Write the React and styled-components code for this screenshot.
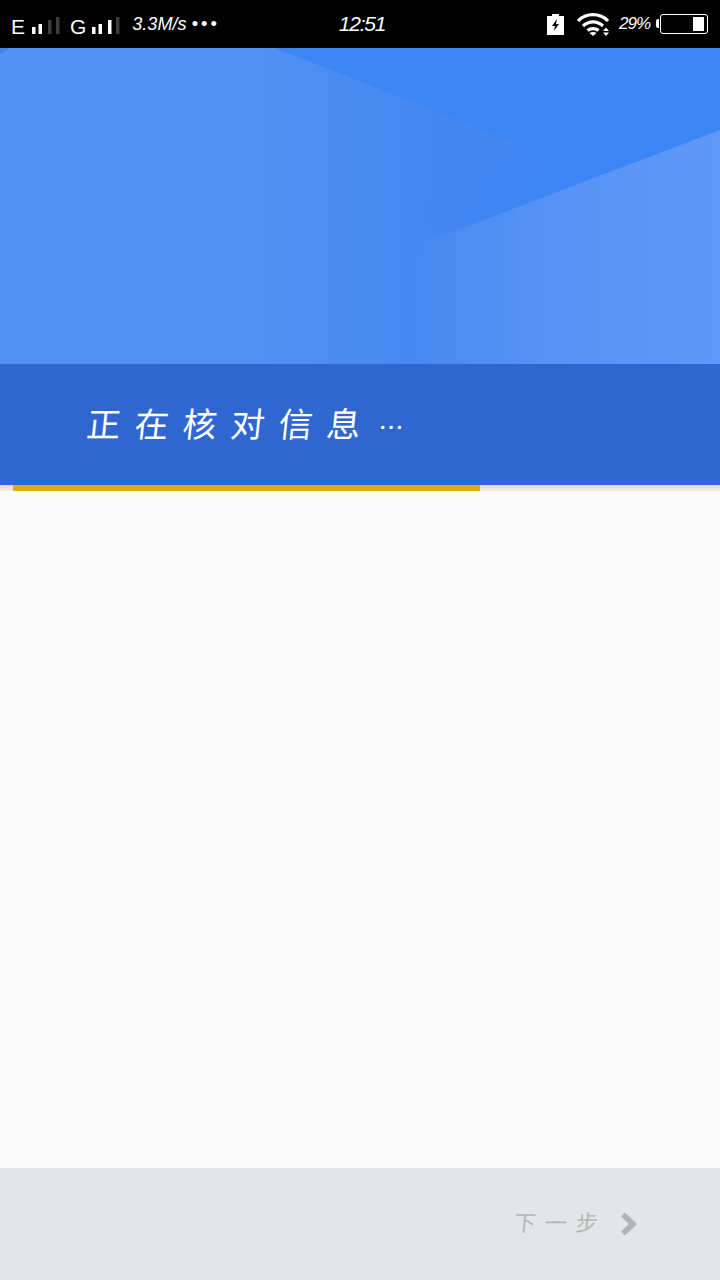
import React from "react";
import styled, { createGlobalStyle } from "styled-components";

const cjk = `"Noto Sans CJK SC", "Noto Sans CJK JP", sans-serif`;

const Global = createGlobalStyle`
  html, body { margin: 0; padding: 0; background: #fafafa; }
  * { box-sizing: border-box; }
`;

const Page = styled.div`
  width: 720px;
  height: 1280px;
  display: flex;
  flex-direction: column;
  background: #fafafa;
  overflow: hidden;
`;

const StatusBar = styled.div`
  height: 48px;
  background: #000;
  color: #fff;
  display: grid;
  grid-template-columns: 1fr auto 1fr;
  align-items: center;
  padding: 0 12px 0 11px;
`;

const StatusLeft = styled.div`
  display: flex;
  align-items: center;
`;

const StatusRight = styled.div`
  display: flex;
  align-items: center;
  justify-content: flex-end;
`;

const NetLetter = styled.span`
  font: 400 21px/1 "Liberation Sans", sans-serif;
  margin-top: 5px;
  margin-right: ${(p) => p.$gap}px;
`;

const Speed = styled.span`
  font: italic 400 18px/1 "Liberation Sans", sans-serif;
  margin-left: 12px;
  margin-top: -1px;
`;

const Dots = styled.span`
  font: 700 14px/1 "DejaVu Sans", sans-serif;
  letter-spacing: 0.5px;
  margin-left: 4px;
`;

const Clock = styled.span`
  font: italic 400 21px/1 "Liberation Sans", sans-serif;
  letter-spacing: -1.2px;
  margin-left: 5px;
  margin-top: -1px;
`;

const Percent = styled.span`
  font: italic 400 17px/1 "Liberation Sans", sans-serif;
  letter-spacing: -1px;
  margin: -1px 10px 0 9px;
`;

const Battery = styled.div`
  position: relative;
  width: 48px;
  height: 20px;
  border: 1.5px solid #fff;
  border-radius: 3px;
  display: flex;
  justify-content: flex-end;
  padding: 2px 3px;
  &::before {
    content: "";
    position: absolute;
    left: -5px;
    top: 4px;
    width: 3px;
    height: 9px;
    background: #fff;
    border-radius: 2px 0 0 2px;
  }
`;

const BatteryFill = styled.div`
  width: 11px;
  background: #fff;
`;

const Hero = styled.div`
  position: relative;
  height: 316px;
  background: linear-gradient(90deg, #5391f3 0%, #5290f3 36%, #4b8cf2 48%, #4587f1 60%, #4587f1 100%);
  overflow: hidden;
`;

const HeroArt = styled.svg`
  position: absolute;
  inset: 0;
  width: 100%;
  height: 100%;
`;

const Banner = styled.div`
  height: 121px;
  background: #2f66d0;
  display: flex;
  align-items: center;
  padding: 0 0 4px 87px;
`;

const BannerText = styled.h1`
  margin: 0;
  color: #fff;
  font: 400 34px/1 ${cjk};
  letter-spacing: 14px;
  white-space: nowrap;
  transform: skewX(-6deg);
`;

const Ellipsis = styled.span`
  font-size: 25px;
  letter-spacing: 0;
  margin-left: 4px;
`;

const ProgressTrack = styled.div`
  height: 6px;
  padding-left: 13px;
  background: linear-gradient(#e0d6c2, #f3efe6);
`;

const ProgressBar = styled.div`
  width: 467px;
  height: 100%;
  background: #e0a812;
`;

const Body = styled.div`
  flex: 1;
  background: #fafafa;
`;

const Footer = styled.div`
  height: 112px;
  background: #e2e6e7;
  display: flex;
  align-items: center;
  justify-content: flex-end;
  padding-right: 82px;
  gap: 22px;
`;

const NextLabel = styled.span`
  color: #b4b8b9;
  font: 400 22px/1 ${cjk};
  letter-spacing: 9px;
  margin-right: -9px;
  margin-top: -7px;
  transform: skewX(-6deg);
`;

const SignalSvg = styled.svg`
  display: block;
  margin-top: 2px;
  margin-right: ${(p) => p.$gap || 0}px;
`;

const WifiSvg = styled.svg`
  display: block;
  margin-left: 13px;
`;

const barX = [2, 8.5, 18, 26];
const barH = [7, 10, 14, 17];

function Signal({ on, gap }) {
  return (
    <SignalSvg width="30" height="18" viewBox="0 0 30 18" $gap={gap}>
      {barX.map((x, i) => (
        <rect key={i} x={x} y={18 - barH[i]} width="3.500" height={barH[i]} fill={i < on ? "#fff" : "#3d3d3d"} />
      ))}
    </SignalSvg>
  );
}

export default function App() {
  return (
    <Page>
      <Global />
      <StatusBar>
        <StatusLeft>
          <NetLetter $gap={5}>E</NetLetter>
          <Signal on={2} gap={10} />
          <NetLetter $gap={4}>G</NetLetter>
          <Signal on={3} />
          <Speed>3.3M/s</Speed>
          <Dots>•••</Dots>
        </StatusLeft>
        <Clock>12:51</Clock>
        <StatusRight>
          <svg width="17" height="21" viewBox="0 0 17 21">
            <path d="M5 0h7v2h5v19H0V2h5z" fill="#fff" />
            <path d="M10 5 5 12h3l-1 5 5-7H9z" fill="#000" />
          </svg>
          <WifiSvg width="33" height="24" viewBox="0 0 33 24">
            <g fill="none" stroke="#fff" strokeWidth="3.200">
              <path d="M1 9c8-8.500 22-8.500 30 0" />
              <path d="M6 14c6-5.500 14-5.500 20 0" />
              <path d="M10.500 18.500c3-2.500 8-2.500 11 0" />
            </g>
            <path d="M12.500 21c2-1.500 5-1.500 7 0L16 24z" fill="#fff" />
            <path d="M26 19h6l-3-3.500zM26 20.500h6L29 24z" fill="#fff" />
          </WifiSvg>
          <Percent>29%</Percent>
          <Battery>
            <BatteryFill />
          </Battery>
        </StatusRight>
      </StatusBar>
      <Hero>
        <HeroArt viewBox="0 0 720 316" preserveAspectRatio="none">
          <defs>
            <linearGradient id="lower" gradientUnits="userSpaceOnUse" x1="400" x2="720" y1="0" y2="0">
              <stop offset="0" stopColor="#4587f1" stopOpacity="0.4" />
              <stop offset="0.12" stopColor="#4a8af2" />
              <stop offset="0.45" stopColor="#5793f5" />
              <stop offset="1" stopColor="#6098f7" />
            </linearGradient>
            <filter id="soft" x="-30%" y="-30%" width="160%" height="160%">
              <feGaussianBlur stdDeviation="18" />
            </filter>
          </defs>
          <path d="M530 80H760V200L450 200z" fill="#3c85f4" filter="url(#soft)" />
          <path d="M275 0H720V82L600 130 520 96z" fill="#3c85f4" />
          <path d="M720 82V316H400V199L413 199z" fill="url(#lower)" />
          <path d="M0 0H10L0 6z" fill="#4184ee" />
        </HeroArt>
      </Hero>
      <Banner>
        <BannerText>
          正在核对信息<Ellipsis>…</Ellipsis>
        </BannerText>
      </Banner>
      <ProgressTrack>
        <ProgressBar />
      </ProgressTrack>
      <Body />
      <Footer>
        <NextLabel>下一步</NextLabel>
        <svg width="18" height="24" viewBox="0 0 18 24">
          <path d="M3 2.500 13 12 3 21.500" fill="none" stroke="#b0b4b5" strokeWidth="5.500" />
        </svg>
      </Footer>
    </Page>
  );
}
